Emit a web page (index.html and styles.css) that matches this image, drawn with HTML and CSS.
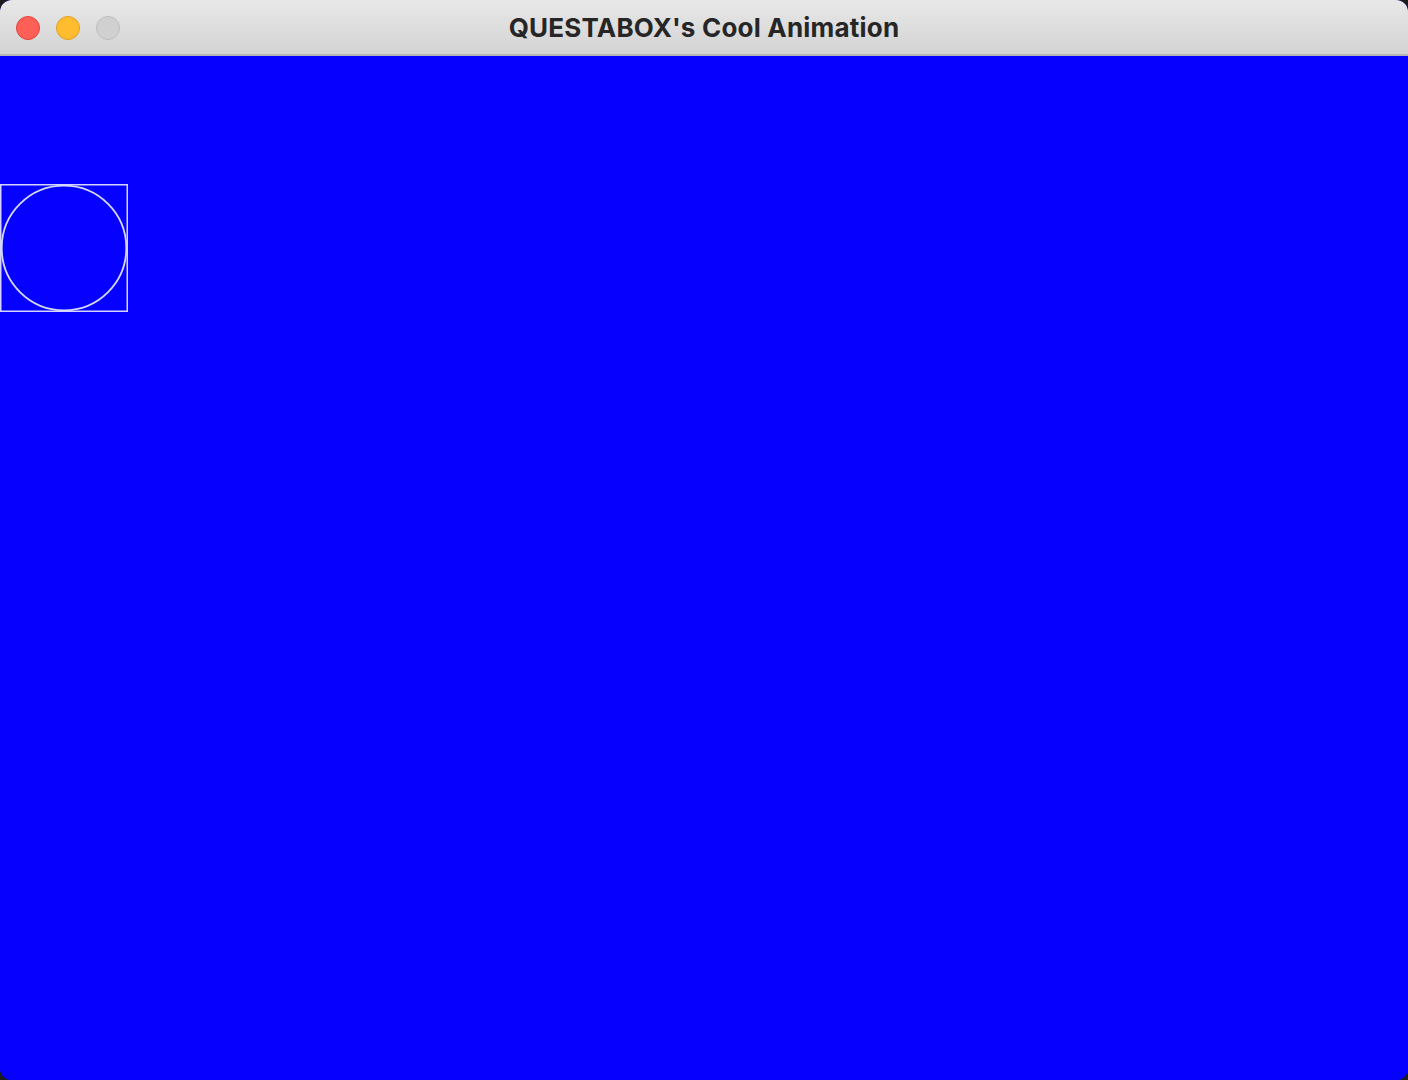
FILE: index.html
```html
<!DOCTYPE html>
<html>
<head>
<meta charset="utf-8">
<link rel="stylesheet" href="styles.css">
</head>
<body>
<div class="window">
  <div class="titlebar">
    <div class="lights">
      <span class="light red"></span>
      <span class="light yellow"></span>
      <span class="light gray"></span>
    </div>
    <div class="title">QUESTABOX's Cool Animation</div>
  </div>
  <div class="canvas">
    <div class="sprite">
      <svg width="128" height="128" viewBox="0 0 128 128">
        <rect x="0.75" y="0.75" width="126.5" height="126.5" fill="none" stroke="#d4d4ff" stroke-width="1.5"/>
        <circle cx="64" cy="64" r="62.3" fill="none" stroke="#d8d8ff" stroke-width="1.8"/>
      </svg>
    </div>
  </div>
</div>
</body>
</html>
```

FILE: styles.css
```css
html, body {
  margin: 0;
  padding: 0;
  background: #1c1c1c;
}
.window {
  width: 1408px;
  height: 1080px;
  border-radius: 12px;
  overflow: hidden;
  display: flex;
  flex-direction: column;
  background: #0500ff;
}
.titlebar {
  height: 54px;
  flex: none;
  position: relative;
  background: linear-gradient(#e8e8e8, #d3d3d3);
  border-bottom: 2px solid #b4b4b4;
  display: flex;
  align-items: center;
  justify-content: center;
}
.lights {
  position: absolute;
  left: 16px;
  top: 16px;
  display: flex;
  gap: 16px;
}
.light {
  width: 24px;
  height: 24px;
  border-radius: 50%;
  box-sizing: border-box;
}
.red { background: #fe5f57; border: 1px solid #e0443e; }
.yellow { background: #febc2e; border: 1px solid #dea123; }
.gray { background: #d0d0d0; border: 1px solid #bcbcbc; }
.title {
  font-family: Inter, "Noto Sans", sans-serif;
  font-weight: 700;
  font-size: 26px;
  color: #262626;
  letter-spacing: 0.2px;
}
.canvas {
  flex: 1;
  padding-top: 128px;
  background: #0500ff;
}
.sprite {
  width: 128px;
  height: 128px;
}
.sprite svg { display: block; }
```
